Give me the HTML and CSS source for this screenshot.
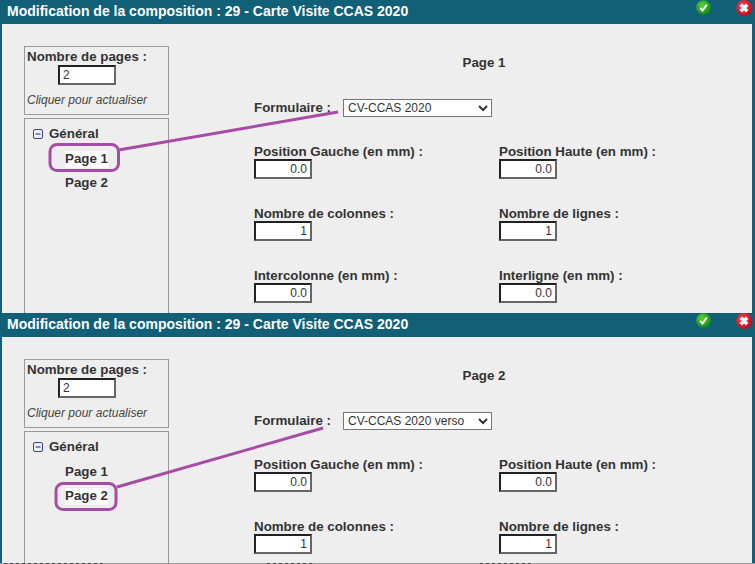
FILE: index.html
```html
<!DOCTYPE html>
<html lang="fr">
<head>
<meta charset="utf-8">
<title>Modification de la composition</title>
<link rel="stylesheet" href="styles.css">
</head>
<body>
<svg class="defs" width="0" height="0" aria-hidden="true">
  <defs>
    <radialGradient id="gGreen" cx="40%" cy="35%" r="70%"><stop offset="0" stop-color="#5fd03a"/><stop offset="1" stop-color="#068a12"/></radialGradient>
    <radialGradient id="gRed" cx="40%" cy="35%" r="70%"><stop offset="0" stop-color="#f6454f"/><stop offset="1" stop-color="#c80514"/></radialGradient>
    <symbol id="ok" viewBox="0 0 16 16"><circle cx="8" cy="8" r="7.8" fill="url(#gGreen)"/><path d="M4.5 8.5 L7 11.2 L11.6 4.8" fill="none" stroke="#fff" stroke-width="2"/></symbol>
    <symbol id="ko" viewBox="0 0 16 16"><circle cx="8" cy="8" r="7.9" fill="url(#gRed)"/><path d="M4.8 4.8 L11.2 11.2 M11.2 4.8 L4.8 11.2" fill="none" stroke="#fff" stroke-width="3.4"/></symbol>
  </defs>
</svg>

<section class="panel panel-a">
  <header class="bar">
    <h1 class="title">Modification de la composition : 29 - Carte Visite CCAS 2020</h1>
    <svg class="ico ico-ok" width="15" height="15"><use href="#ok"/></svg>
    <svg class="ico ico-ko" width="16" height="16"><use href="#ko"/></svg>
  </header>
  <div class="body">
    <aside class="side">
      <div class="box box-pages">
        <div class="lab">Nombre de pages :</div>
        <input class="num num-left" value="2">
        <div class="hint">Cliquer pour actualiser</div>
      </div>
      <div class="box box-tree">
        <div class="tree-root"><svg class="minus" width="10" height="10" viewBox="0 0 10 10"><rect x=".5" y=".5" width="9" height="9" rx="1.5" fill="#eef" stroke="#33449a"/><path d="M2.5 5H7.5" stroke="#222a66"/></svg><span class="lab">Général</span></div>
        <div class="tree-item"><span class="lab sel">Page 1</span></div>
        <div class="tree-item"><span class="lab">Page 2</span></div>
      </div>
    </aside>
    <main class="main">
      <div class="page-name lab">Page 1</div>
      <div class="form-row"><span class="lab form-lab">Formulaire :</span><select class="sel-box"><option>CV-CCAS 2020</option></select></div>
      <div class="fields">
        <div class="field"><div class="lab">Position Gauche (en mm) :</div><input class="num" value="0.0"></div>
        <div class="field"><div class="lab">Position Haute (en mm) :</div><input class="num" value="0.0"></div>
        <div class="field"><div class="lab">Nombre de colonnes :</div><input class="num" value="1"></div>
        <div class="field"><div class="lab">Nombre de lignes :</div><input class="num" value="1"></div>
        <div class="field"><div class="lab">Intercolonne (en mm) :</div><input class="num" value="0.0"></div>
        <div class="field"><div class="lab">Interligne (en mm) :</div><input class="num" value="0.0"></div>
      </div>
    </main>
  </div>
  <svg class="note" width="755" height="313" aria-hidden="true">
    <rect x="50" y="144.5" width="68.5" height="26" rx="7"/>
    <path d="M118.5 150 L338 112"/>
  </svg>
</section>

<section class="panel panel-b">
  <header class="bar">
    <h1 class="title">Modification de la composition : 29 - Carte Visite CCAS 2020</h1>
    <svg class="ico ico-ok" width="15" height="15"><use href="#ok"/></svg>
    <svg class="ico ico-ko" width="16" height="16"><use href="#ko"/></svg>
  </header>
  <div class="body">
    <aside class="side">
      <div class="box box-pages">
        <div class="lab">Nombre de pages :</div>
        <input class="num num-left" value="2">
        <div class="hint">Cliquer pour actualiser</div>
      </div>
      <div class="box box-tree">
        <div class="tree-root"><svg class="minus" width="10" height="10" viewBox="0 0 10 10"><rect x=".5" y=".5" width="9" height="9" rx="1.5" fill="#eef" stroke="#33449a"/><path d="M2.5 5H7.5" stroke="#222a66"/></svg><span class="lab">Général</span></div>
        <div class="tree-item"><span class="lab">Page 1</span></div>
        <div class="tree-item"><span class="lab sel">Page 2</span></div>
      </div>
    </aside>
    <main class="main">
      <div class="page-name lab">Page 2</div>
      <div class="form-row"><span class="lab form-lab">Formulaire :</span><select class="sel-box"><option>CV-CCAS 2020 verso</option></select></div>
      <div class="fields">
        <div class="field"><div class="lab">Position Gauche (en mm) :</div><input class="num" value="0.0"></div>
        <div class="field"><div class="lab">Position Haute (en mm) :</div><input class="num" value="0.0"></div>
        <div class="field"><div class="lab">Nombre de colonnes :</div><input class="num" value="1"></div>
        <div class="field"><div class="lab">Nombre de lignes :</div><input class="num" value="1"></div>
      </div>
    </main>
  </div>
  <svg class="note" width="755" height="250" aria-hidden="true">
    <rect x="56" y="170.5" width="60" height="26" rx="7"/>
    <path d="M117 174 L323 115"/>
  </svg>
</section>
<div class="strip"><span class="frag frag-a"></span><span class="frag frag-b"></span><span class="frag frag-c"></span></div>
</body>
</html>
```
FILE: styles.css
```css
* { box-sizing: border-box; }
html, body { margin: 0; padding: 0; }
body {
  width: 755px;
  height: 564px;
  overflow: hidden;
  background: #eee;
  font-family: "Liberation Sans", Arial, sans-serif;
  color: #333;
}
.defs { position: absolute; }
.panel {
  position: relative;
  overflow: hidden;
  display: flex;
  flex-direction: column;
  background: #eee;
  border-left: 2px solid #116078;
  border-right: 3px solid #116078;
}
.panel-a { height: 313px; }
.panel-b { height: 250px; }
.bar {
  flex: none;
  height: 24px;
  margin: 0 -3px 0 -2px;
  padding-left: 7px;
  background: #116078;
  display: flex;
  align-items: flex-start;
}
.title {
  flex: 1;
  margin: 0;
  font-size: 14px;
  line-height: 22px;
  font-weight: bold;
  color: #fff;
}
.ico { flex: none; display: block; }
.ico-ko { margin: 0 3px 0 25px; }
.body {
  flex: 1;
  min-height: 0;
  display: flex;
  align-items: flex-start;
  padding: 22px 0 0 22px;
}
.side { flex: none; width: 145px; }
.lab { font-size: 13.33px; line-height: 16px; font-weight: bold; color: #333; }
.box { border: 1px solid #999; }
.box-pages { height: 69px; padding: 2px 0 0 2px; }
.box-tree { height: 400px; margin-top: 3px; padding: 7px 0 0 8px; }
.num {
  display: block;
  width: 58px;
  height: 20px;
  padding: 0 3px;
  border-width: 2px;
  border-style: solid;
  border-color: #222 #666 #666 #222;
  border-radius: 0;
  background: #fff;
  color: #333;
  font: 12px "Liberation Sans", Arial, sans-serif;
  text-align: right;
  outline: none;
}
.num-left { margin: 0 0 0 31px; text-align: left; }
.hint { margin-top: 8px; font-size: 12px; line-height: 14px; font-style: italic; color: #444; white-space: nowrap; }
.tree-root { display: flex; align-items: center; height: 16px; margin-bottom: 9px; }
.minus { margin-right: 6px; flex: none; }
.tree-item { margin: 8px 0 0 32px; height: 16px; display: flex; }
.tree-root + .tree-item { margin-top: 0; }
.sel { background: #fff; padding-bottom: 1px; height: 17px; }
.main { flex: 1; padding-left: 85px; min-width: 0; }
.page-name { width: 459px; text-align: center; margin-top: 9px; padding-left: 1px; }
.form-row { display: flex; align-items: center; height: 18px; margin-top: 28px; }
.form-lab { width: 89px; flex: none; white-space: nowrap; }
.sel-box {
  width: 149px;
  height: 18px;
  margin: 0;
  padding: 0;
  font: 12px "Liberation Sans", Arial, sans-serif;
  color: #333;
  background: #fff;
  border: 1px solid #767676;
  border-radius: 0;
}
.fields {
  display: grid;
  grid-template-columns: 245px 1fr;
  row-gap: 28px;
  margin-top: 28px;
}
.field { height: 34px; }
.field .lab { height: 14px; line-height: 14px; }
.note {
  position: absolute;
  left: -2px;
  top: 0;
  pointer-events: none;
  fill: none;
  stroke: #a64ca6;
  stroke-width: 3;
}
.strip { height: 1px; background: #999; display: flex; overflow: hidden; }
.frag { height: 1px; background: repeating-linear-gradient(90deg, #444 0 3px, #aaa 3px 6px); }
.frag-a { width: 100px; margin-left: 4px; }
.frag-b { width: 46px; margin-left: 163px; }
.frag-c { width: 54px; margin-left: 167px; }
```
